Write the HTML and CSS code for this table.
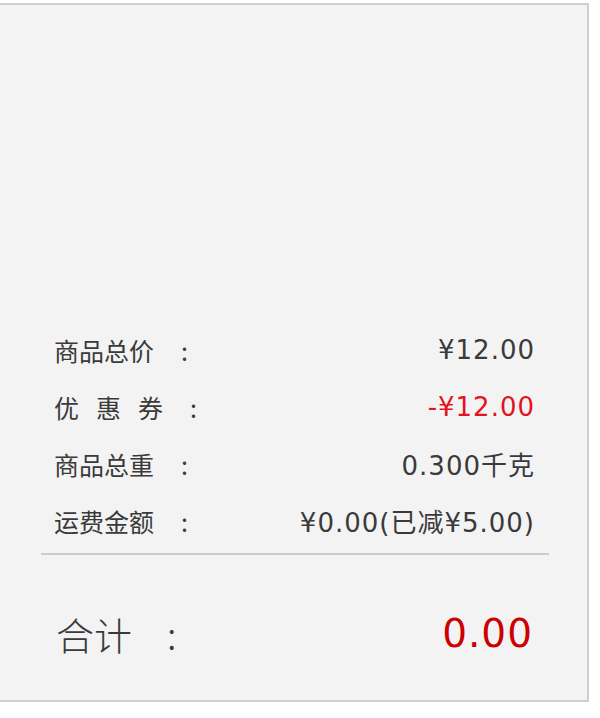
FILE: index.html
```html
<!DOCTYPE html>
<html lang="zh-CN">
<head>
<meta charset="utf-8">
<title>订单汇总</title>
<link rel="stylesheet" href="styles.css">
</head>
<body>
<div class="panel">
  <div class="rows">
    <div class="row"><span class="label">商品总价<span class="colon">:</span></span><span class="value">¥12.00</span></div>
    <div class="row"><span class="label"><span class="spaced">优惠</span>券<span class="colon">:</span></span><span class="value red">-¥12.00</span></div>
    <div class="row"><span class="label">商品总重<span class="colon">:</span></span><span class="value">0.300千克</span></div>
    <div class="row"><span class="label">运费金额<span class="colon">:</span></span><span class="value">¥0.00(已减¥5.00)</span></div>
  </div>
  <div class="total">
    <span class="total-label">合计<span class="colon-lg">:</span></span>
    <span class="total-value">0.00</span>
  </div>
</div>
</body>
</html>
```

FILE: styles.css
```css
html, body {
  margin: 0;
  padding: 0;
  background: #ffffff;
}
body {
  font-family: "DejaVu Sans", "Noto Sans CJK SC", sans-serif;
  color: #3a3a3a;
}
.panel {
  box-sizing: border-box;
  margin-top: 3px;
  width: 589px;
  height: 699px;
  background: #f3f3f3;
  border-top: 2px solid #cfcfcf;
  border-right: 2px solid #cfcfcf;
  border-bottom: 2px solid #cfcfcf;
  display: flex;
  flex-direction: column;
  justify-content: flex-end;
  padding: 0 38px 0 41px;
}
.rows {
  padding: 0 14px 4px 13px;
  border-bottom: 2px solid #cccccc;
}
.row {
  display: flex;
  justify-content: space-between;
  align-items: center;
  height: 57px;
  font-size: 25px;
}
.label {
  font-family: "Noto Sans CJK SC", sans-serif;
}
.spaced {
  letter-spacing: 17px;
}
.colon {
  margin-left: 27px;
}
.value {
  font-family: "DejaVu Sans", "Noto Sans CJK SC", sans-serif;
  font-size: 26px;
  letter-spacing: 1px;
}
.red {
  color: #e3131b;
}
.total {
  display: flex;
  justify-content: space-between;
  align-items: center;
  height: 60px;
  padding: 48px 16px 37px 15px;
}
.total-label {
  font-family: "Noto Sans CJK SC", sans-serif;
  font-size: 38px;
  font-weight: 300;
}
.colon-lg {
  margin-left: 35px;
}
.total-value {
  font-family: "DejaVu Sans", sans-serif;
  font-size: 39px;
  letter-spacing: 1px;
  color: #cc0000;
}
```
